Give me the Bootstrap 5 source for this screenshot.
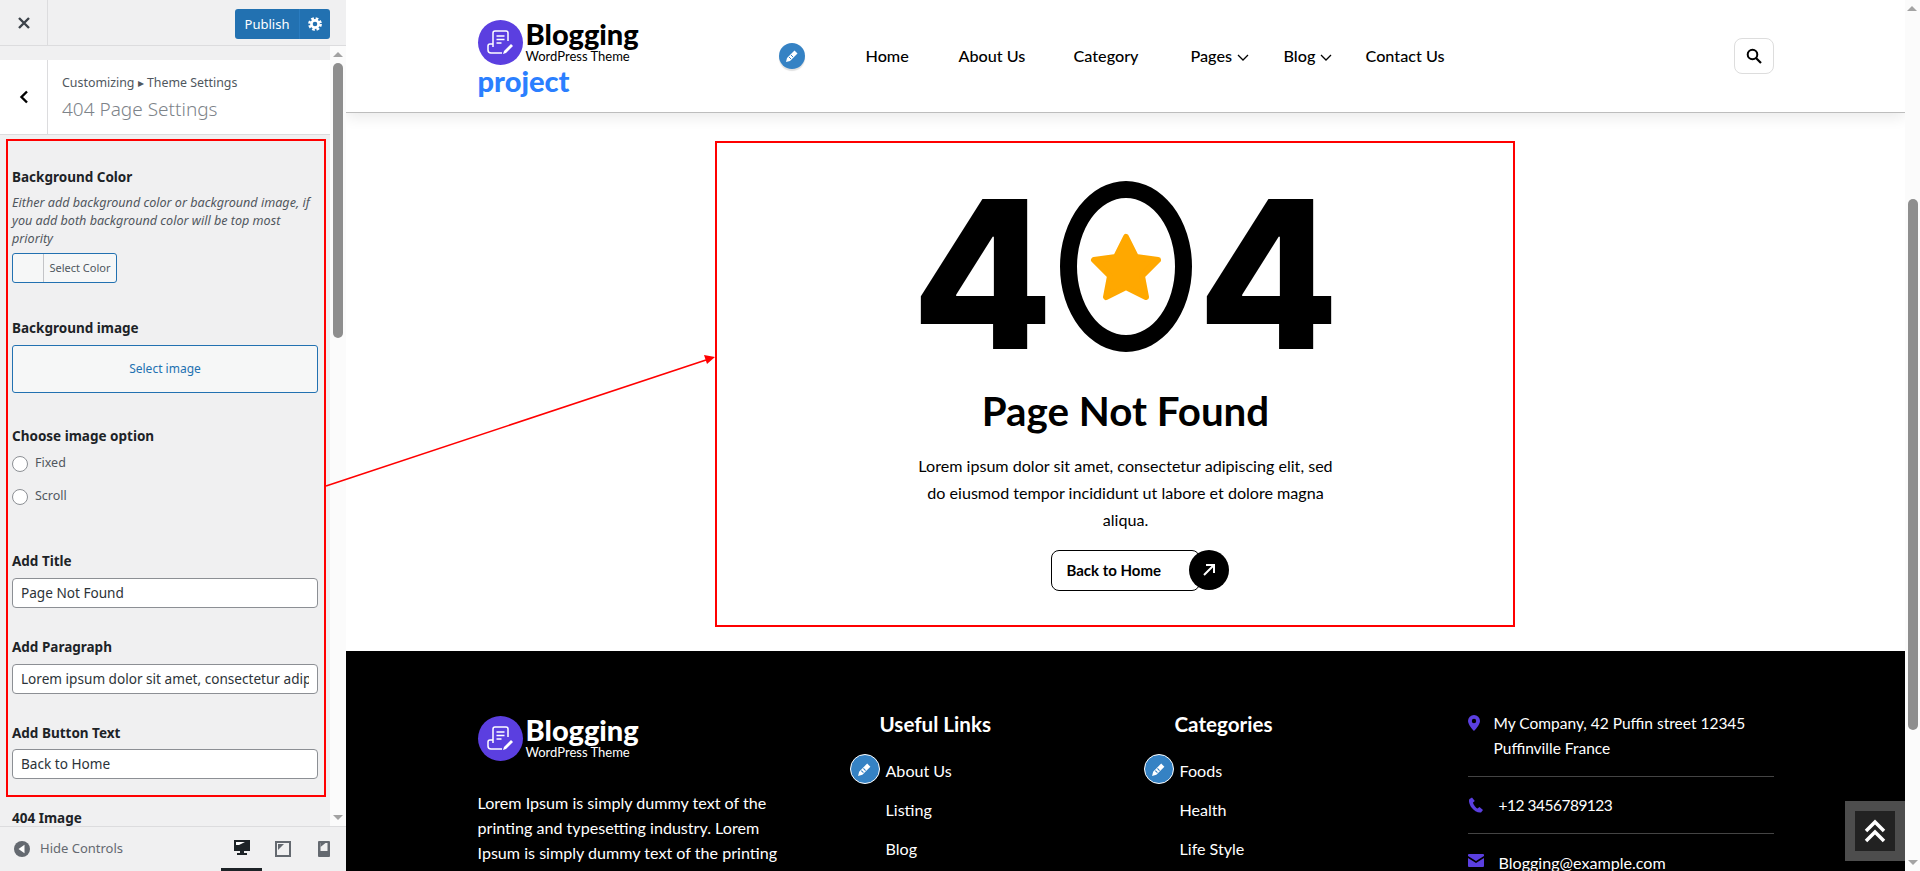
<!DOCTYPE html>
<html lang="en">
<head>
    <meta charset="UTF-8">
    <meta name="viewport" content="width=device-width, initial-scale=1.0">
    <title>404 Page Settings</title>
    <link href="https://cdn.jsdelivr.net/npm/bootstrap@5.3.0/dist/css/bootstrap.min.css" rel="stylesheet">
    <style>
        body { font-family: "Lato", "Liberation Sans", sans-serif; color: #000; }

        /* customizer sidebar */
        .cz-side { width: 346px; flex: none; background: #f0f0f1; font-family: "Noto Sans", "Liberation Sans", sans-serif; font-size: 13px; color: #50575e; }
        .cz-top { height: 46px; border-bottom: 1px solid #dcdcde; }
        .cz-close { width: 48px; border-right: 1px solid #dcdcde; }
        .cz-publish { width: 95px; height: 30px; margin: 9px 16px 0 auto; background: #2271b1; border-radius: 3px; color: #fff; font-size: 13px; }
        .cz-publish span { width: 65px; text-align: center; border-right: 1px solid #2a7cc0; line-height: 30px; }
        .cz-body { min-height: 0; }
        .cz-main { width: 330px; padding-top: 14px; }
        .cz-head { height: 75px; background: #fff; border-bottom: 1px solid #dcdcde; }
        .cz-back { width: 48px; border-right: 1px solid #dcdcde; }
        .cz-crumb { padding: 13px 0 0 14px; line-height: 20px; font-size: 12.4px; }
        .cz-title { font-size: 19px; font-weight: 300; color: #7d8389; line-height: 30px; margin-top: 1px; }
        .cz-box { margin: 4px 4px 0 6px; border: 2px solid #f00; padding: 26px 6px 16px 4px; height: 658px; }
        .cz-label { font-weight: 700; font-size: 13.5px; line-height: 20px; color: #1d2327; margin-bottom: 7px; }
        .cz-desc { font-style: italic; font-size: 12.6px; line-height: 18px; margin-bottom: 5px; white-space: nowrap; }
        .cz-color { width: 105px; height: 30px; background: #f6f7f7; border: 1px solid #2271b1; border-radius: 3px; font-size: 11px; margin-bottom: 35px; }
        .cz-color i { width: 31px; border-right: 1px solid #c3c4c7; }
        .cz-color span { flex: 1; text-align: center; line-height: 28px; }
        .cz-select { height: 48px; background: #f6f7f7; border: 1px solid #2271b1; border-radius: 3px; color: #2271b1; font-size: 12px; line-height: 46px; text-align: center; margin-bottom: 33px; }
        .cz-radio-first { margin-top: 1px; }
        .cz-radio { height: 33px; font-size: 12.5px; }
        .cz-radio i { width: 16px; height: 16px; border: 1px solid #8c8f94; border-radius: 50%; background: #fff; margin-right: 7px; }
        .cz-gap-title { margin-top: 38px; }
        .cz-label-tight { margin-bottom: 6px; }
        .cz-input { height: 30px; background: #fff; border: 1px solid #8c8f94; border-radius: 4px; font-size: 13.6px; line-height: 28px; padding: 0 8px; color: #2c3338; margin-bottom: 29px; }
        .cz-input div { overflow: hidden; white-space: nowrap; }
        .cz-next { padding: 11px 0 0 12px; }
        .cz-bar { width: 16px; flex: none; background: #fbfbfb; }
        .cz-thumb { width: 10px; height: 275px; background: #8e8e8e; border-radius: 5px; margin: 0 auto; }
        .tri-up { width: 0; height: 0; border: 5px solid transparent; border-top: 0; border-bottom: 5px solid #a3a3a3; margin: 6px auto 6px; }
        .tri-down { width: 0; height: 0; border: 5px solid transparent; border-bottom: 0; border-top: 5px solid #a3a3a3; margin: auto auto 6px; }
        .cz-foot { height: 45px; border-top: 1px solid #dcdcde; padding-left: 14px; color: #646970; }
        .cz-hide { margin-left: 10px; }
        .cz-dev { width: 41px; height: 44px; flex: none; }
        .cz-dev.on { border-bottom: 3px solid #1d2327; }
        .cz-devs { margin-left: auto; margin-right: 2px; }

        /* preview */
        .site { min-width: 0; }
        .site-top { height: 113px; border-bottom: 1px solid #bdbdbd; box-shadow: 0 4px 14px rgba(0,0,0,.09); position: relative; }
        .brand { width: 301px; align-self: flex-start; padding-top: 20px; }
        .brand-mark { width: 45px; height: 45px; flex: none; border-radius: 50%; background: #5b3fe0; }
        .brand-name { font-weight: 900; font-size: 29px; line-height: 28px; margin-left: 3px; }
        .brand-sub { font-size: 13px; line-height: 14px; margin-left: 3px; margin-top: 1px; }
        .brand-proj { font-weight: 900; font-size: 29px; line-height: 33px; color: #2b7fff; margin-top: -1px; }
        .pen { width: 26px; height: 26px; border-radius: 50%; background: #3582c4; flex: none; box-shadow: 0 2px 1px rgba(0,0,0,.12); }
        .pen-ring { width: 30px; height: 30px; border: 1.5px solid #fff; box-shadow: none; position: absolute; left: -36px; top: 3px; }
        .top-nav { margin-left: 61px; display: grid; grid-template-columns: 93px 115px 117px 93px 82px auto; font-size: 16.2px; font-weight: 500; }
        .top-nav svg { margin-left: 5px; }
        .find { width: 40px; height: 36px; border: 1px solid #ddd; border-radius: 8px; margin-left: auto; }
        .nf { height: 538px; padding-top: 68px; }
        .nf-num { height: 171px; gap: 17px; }
        .nf-four { width: 120px; font-family: "Inter", "Liberation Sans", sans-serif; font-weight: 800; font-size: 206px; line-height: 150px; margin-top: 18px; display: flex; justify-content: center; }
        .nf-zero { width: 132px; height: 171px; border: 17px solid #000; border-radius: 50%; }
        .nf-zero-txt { position: absolute; opacity: 0; font-size: 1px; }
        .nf-title { font-size: 40.3px; font-weight: 700; line-height: 50px; margin: 34px 0 16px; }
        .nf-text { font-size: 16.1px; line-height: 27px; margin: 0 0 17px; }
        .nf-cta { padding-left: 28px; }
        .nf-btn { width: 149px; height: 41px; border: 1px solid #000; border-radius: 8px; font-size: 15px; font-weight: 700; padding-left: 15px; line-height: 39px; }
        .nf-go { width: 40px; height: 40px; border-radius: 50%; background: #000; margin-left: -11px; }
        .note-box { position: absolute; left: 715px; top: 141px; width: 800px; height: 486px; border: 2px solid #f00; pointer-events: none; }
        .note-arrow { position: absolute; left: 0; top: 0; pointer-events: none; }

        .site-foot { background: #000; color: #fff; height: 300px; padding-top: 61px; font-size: 16.1px; }
        .foot-brand { margin-top: 4px; }
        .foot-text { line-height: 25px; margin: 29px 0 0; white-space: nowrap; }
        .foot-head { font-size: 20.6px; font-weight: 700; line-height: 24px; margin: 0 0 15px; }
        .foot-links { line-height: 39px; list-style: none; padding: 0; margin: 0; }
        .foot-links li { position: relative; }
        .foot-col-a { padding-left: 90px; }
        .foot-col-a .foot-head { margin-left: -6px; }
        .foot-col-b { padding-left: 54px; }
        .foot-col-b .foot-head { margin-left: -5px; }
        .foot-row { line-height: 25px; padding-bottom: 15px; margin-bottom: 16px; border-bottom: 1px solid #444; gap: 10px; white-space: nowrap; }
        .foot-row:first-child { margin-top: -1px; font-size: 15.5px; }
        .foot-ico { width: 16px; flex: none; padding-top: 4px; }
        .foot-ico svg { display: block; }
        .foot-row-b { gap: 15px; }
        .foot-tel { letter-spacing: -.5px; font-size: 15.5px; }
        .page-bar { width: 15px; flex: none; background: #fbfbfb; }
        .page-thumb { width: 10px; height: 531px; background: #8e8e8e; border-radius: 5px; margin: 199px auto 0; }
        .tri-page { position: absolute; right: 3px; top: 0; }
        .to-top { position: absolute; right: 15px; top: 801px; width: 60px; height: 60px; background: #4d4d4d; }
        .to-top div { width: 40px; height: 40px; background: #222; }
    </style>
</head>
<body class="overflow-hidden">
    <div class="d-flex vh-100 position-relative overflow-hidden">
        <!-- customizer controls -->
        <aside class="cz-side d-flex flex-column">
            <div class="cz-top d-flex flex-shrink-0">
                <div class="cz-close d-flex align-items-center justify-content-center">
                    <svg width="14" height="14" viewBox="0 0 14 14"><path d="M2 2l10 10M12 2L2 12" stroke="#3c434a" stroke-width="2.4"/></svg>
                </div>
                <div class="cz-publish d-flex align-items-stretch">
                    <span>Publish</span>
                    <div class="flex-grow-1 d-flex align-items-center justify-content-center">
                        <svg width="14" height="14" viewBox="0 0 14 14"><circle cx="7" cy="7" r="3.6" fill="none" stroke="#fff" stroke-width="2.6"/><circle cx="7" cy="7" r="5.6" fill="none" stroke="#fff" stroke-width="2.6" stroke-dasharray="2.6 1.8"/></svg>
                    </div>
                </div>
            </div>
            <div class="cz-body d-flex flex-grow-1">
                <div class="cz-main d-flex flex-column overflow-hidden">
                    <div class="cz-head d-flex flex-shrink-0">
                        <div class="cz-back d-flex align-items-center justify-content-center">
                            <svg width="10" height="14" viewBox="0 0 10 14"><path d="M8 1.500L2.500 7 8 12.500" fill="none" stroke="#000" stroke-width="2.400"/></svg>
                        </div>
                        <div class="cz-crumb">
                            <div>Customizing ▸ Theme Settings</div>
                            <div class="cz-title">404 Page Settings</div>
                        </div>
                    </div>
                    <div class="cz-box flex-shrink-0">
                        <div class="cz-label">Background Color</div>
                        <div class="cz-desc">Either add background color or background image, if<br>you add both background color will be top most<br>priority</div>
                        <div class="cz-color d-flex"><i></i><span>Select Color</span></div>
                        <div class="cz-label">Background image</div>
                        <div class="cz-select">Select image</div>
                        <div class="cz-label mb-0">Choose image option</div>
                        <div class="cz-radio cz-radio-first d-flex align-items-center"><i></i>Fixed</div>
                        <div class="cz-radio d-flex align-items-center"><i></i>Scroll</div>
                        <div class="cz-label cz-gap-title">Add Title</div>
                        <div class="cz-input"><div>Page Not Found</div></div>
                        <div class="cz-label">Add Paragraph</div>
                        <div class="cz-input"><div>Lorem ipsum dolor sit amet, consectetur adipiscing elit</div></div>
                        <div class="cz-label cz-label-tight">Add Button Text</div>
                        <div class="cz-input mb-0"><div>Back to Home</div></div>
                    </div>
                    <div class="cz-label cz-next">404 Image</div>
                </div>
                <div class="cz-bar d-flex flex-column">
                    <div class="tri-up"></div>
                    <div class="cz-thumb"></div>
                    <div class="tri-down"></div>
                </div>
            </div>
            <div class="cz-foot d-flex align-items-center flex-shrink-0">
                <svg width="16" height="16" viewBox="0 0 16 16"><circle cx="8" cy="8" r="8" fill="#646970"/><path d="M10.500 3.800v8.400L4.500 8z" fill="#fff"/></svg>
                <span class="cz-hide">Hide Controls</span>
                <div class="cz-devs d-flex">
                    <div class="cz-dev on d-flex align-items-center justify-content-center">
                        <svg width="18" height="17" viewBox="0 0 18 17"><path d="M1 1h16v11H1z" fill="#1d2327"/><path d="M3 3h9l-6 3H3z" fill="#fff"/><path d="M7 12h4v2h3v2H4v-2h3z" fill="#1d2327"/></svg>
                    </div>
                    <div class="cz-dev d-flex align-items-center justify-content-center">
                        <svg width="16" height="16" viewBox="0 0 16 16"><path d="M1 1h14v14H1z" fill="none" stroke="#646970" stroke-width="2"/><path d="M3 3h6L3 9z" fill="#646970"/></svg>
                    </div>
                    <div class="cz-dev d-flex align-items-center justify-content-center">
                        <svg width="12" height="16" viewBox="0 0 12 16"><path d="M1 0h10a1 1 0 0 1 1 1v14a1 1 0 0 1-1 1H1a1 1 0 0 1-1-1V1a1 1 0 0 1 1-1z" fill="#646970"/><path d="M2.500 2h7v8h-7z" fill="#f0f0f1"/><path d="M2.500 2h5l-5 4z" fill="#646970"/></svg>
                    </div>
                </div>
            </div>
        </aside>

        <!-- site preview -->
        <main class="site flex-grow-1 d-flex flex-column overflow-hidden">
            <header class="site-top flex-shrink-0 bg-white">
                <div class="container d-flex align-items-center h-100">
                    <div class="brand">
                        <div class="d-flex">
                            <div class="brand-mark d-flex align-items-center justify-content-center">
                                <svg width="27" height="25" viewBox="0 0 27 25" fill="none" stroke="#fff" stroke-width="1.500"><path d="M6 17V3a2 2 0 0 1 2-2h11a2 2 0 0 1 2 2v8"/><path d="M9.500 6h8M9.500 9.500h8M9.500 13h5" stroke-width="1.700"/><path d="M6 14H3a2 2 0 0 0-2 2v4a3 3 0 0 0 3 3h11"/><path d="M17 21l7-7 2 2-7 7-3 1z" fill="#fff" stroke="none"/></svg>
                            </div>
                            <div>
                                <div class="brand-name">Blogging</div>
                                <div class="brand-sub">WordPress Theme</div>
                            </div>
                        </div>
                        <div class="brand-proj">project</div>
                    </div>
                    <div class="pen d-flex align-items-center justify-content-center">
                        <svg width="14" height="14" viewBox="0 0 14 14"><path d="M9.500 1.500l3 3-7.500 7.500-4 1 1-4z" fill="#fff"/><path d="M4 8l2 2M6 6l2 2" stroke="#3582c4"/></svg>
                    </div>
                    <nav class="top-nav">
                        <span>Home</span>
                        <span>About Us</span>
                        <span>Category</span>
                        <span>Pages<svg width="12" height="8" viewBox="0 0 12 8"><path d="M1 1l5 5 5-5" fill="none" stroke="#000" stroke-width="1.300"/></svg></span>
                        <span>Blog<svg width="12" height="8" viewBox="0 0 12 8"><path d="M1 1l5 5 5-5" fill="none" stroke="#000" stroke-width="1.300"/></svg></span>
                        <span>Contact Us</span>
                    </nav>
                    <div class="find d-flex align-items-center justify-content-center">
                        <svg width="16" height="16" viewBox="0 0 16 16"><circle cx="6.500" cy="6.500" r="4.800" fill="none" stroke="#000" stroke-width="2"/><path d="M10 10l5 5" stroke="#000" stroke-width="2.200"/></svg>
                    </div>
                </div>
            </header>

            <section class="nf flex-shrink-0 text-center">
                <div class="nf-num d-flex justify-content-center">
                    <div class="nf-four">4</div>
                    <div class="nf-zero d-flex align-items-center justify-content-center flex-shrink-0">
                        <span class="nf-zero-txt">0</span>
                        <svg width="72" height="68" viewBox="0 0 72 68"><path d="M36 4L46 24 68 27 52 43 56 64 36 54 16 64 20 43 4 27 26 24z" fill="#ffa800" stroke="#ffa800" stroke-width="6" stroke-linejoin="round"/></svg>
                    </div>
                    <div class="nf-four">4</div>
                </div>
                <h1 class="nf-title">Page Not Found</h1>
                <p class="nf-text">Lorem ipsum dolor sit amet, consectetur adipiscing elit, sed<br>do eiusmod tempor incididunt ut labore et dolore magna<br>aliqua.</p>
                <div class="nf-cta d-flex justify-content-center">
                    <div class="nf-btn text-start">Back to Home</div>
                    <div class="nf-go d-flex align-items-center justify-content-center">
                        <svg width="14" height="14" viewBox="0 0 14 14" fill="none" stroke="#fff" stroke-width="2"><path d="M2 12L12 2M4 2h8v8"/></svg>
                    </div>
                </div>
            </section>

            <footer class="site-foot flex-shrink-0">
                <div class="container">
                    <div class="row">
                        <div class="col-3">
                            <div class="d-flex foot-brand">
                                <div class="brand-mark d-flex align-items-center justify-content-center">
                                    <svg width="27" height="25" viewBox="0 0 27 25" fill="none" stroke="#fff" stroke-width="1.500"><path d="M6 17V3a2 2 0 0 1 2-2h11a2 2 0 0 1 2 2v8"/><path d="M9.500 6h8M9.500 9.500h8M9.500 13h5" stroke-width="1.700"/><path d="M6 14H3a2 2 0 0 0-2 2v4a3 3 0 0 0 3 3h11"/><path d="M17 21l7-7 2 2-7 7-3 1z" fill="#fff" stroke="none"/></svg>
                                </div>
                                <div>
                                    <div class="brand-name">Blogging</div>
                                    <div class="brand-sub">WordPress Theme</div>
                                </div>
                            </div>
                            <p class="foot-text">Lorem Ipsum is simply dummy text of the<br>printing and typesetting industry. Lorem<br>Ipsum is simply dummy text of the printing</p>
                        </div>
                        <div class="col-3 foot-col-a">
                            <h5 class="foot-head">Useful Links</h5>
                            <ul class="foot-links">
                                <li>
                                    <div class="pen pen-ring d-flex align-items-center justify-content-center">
                                        <svg width="15" height="15" viewBox="0 0 14 14"><path d="M9.500 1.500l3 3-7.500 7.500-4 1 1-4z" fill="#fff"/><path d="M4 8l2 2M6 6l2 2" stroke="#3582c4"/></svg>
                                    </div>
                                    About Us
                                </li>
                                <li>Listing</li>
                                <li>Blog</li>
                            </ul>
                        </div>
                        <div class="col-3 foot-col-b">
                            <h5 class="foot-head">Categories</h5>
                            <ul class="foot-links">
                                <li>
                                    <div class="pen pen-ring d-flex align-items-center justify-content-center">
                                        <svg width="15" height="15" viewBox="0 0 14 14"><path d="M9.500 1.500l3 3-7.500 7.500-4 1 1-4z" fill="#fff"/><path d="M4 8l2 2M6 6l2 2" stroke="#3582c4"/></svg>
                                    </div>
                                    Foods
                                </li>
                                <li>Health</li>
                                <li>Life Style</li>
                            </ul>
                        </div>
                        <div class="col-3">
                            <div class="foot-row d-flex">
                                <div class="foot-ico"><svg width="12" height="16" viewBox="0 0 12 16"><path d="M6 0a6 6 0 0 0-6 6c0 4 6 10 6 10s6-6 6-10a6 6 0 0 0-6-6zm0 8.200a2.200 2.200 0 1 1 0-4.400 2.200 2.200 0 0 1 0 4.400z" fill="#5b3fe0"/></svg></div>
                                <div>My Company, 42 Puffin street 12345<br>Puffinville France</div>
                            </div>
                            <div class="foot-row foot-row-b d-flex">
                                <div class="foot-ico"><svg width="16" height="16" viewBox="0 0 16 16"><path d="M4 .5L1.500 2C.5 3 1 7 3.500 10.500S10 16 13 15.500l2-2.500-3.500-3-2 1.500C8 11 5.500 8 5 5.500L6.800 4z" fill="#5b3fe0"/></svg></div>
                                <div class="foot-tel">+12 3456789123</div>
                            </div>
                            <div class="foot-row foot-row-b d-flex border-0">
                                <div class="foot-ico"><svg width="16" height="13" viewBox="0 0 16 13"><path d="M1 0h14a1 1 0 0 1 1 1v1L8 7 0 2V1a1 1 0 0 1 1-1zM0 4l8 5 8-5v8a1 1 0 0 1-1 1H1a1 1 0 0 1-1-1z" fill="#5b3fe0"/></svg></div>
                                <div>Blogging@example.com</div>
                            </div>
                        </div>
                    </div>
                </div>
            </footer>
        </main>

        <div class="page-bar d-flex flex-column">
            <div class="tri-up tri-page"></div>
            <div class="page-thumb"></div>
            <div class="tri-down"></div>
        </div>

        <!-- annotation drawn on top of the screenshot -->
        <div class="note-box"></div>
        <svg class="note-arrow" width="1920" height="871" viewBox="0 0 1920 871">
            <path d="M326 486L706 360" stroke="#f00" stroke-width="1.600"/>
            <path d="M715 357l-11-2 3 9z" fill="#f00"/>
        </svg>
        <div class="to-top d-flex align-items-center justify-content-center">
            <div class="d-flex align-items-center justify-content-center">
                <svg width="22" height="24" viewBox="0 0 22 24" fill="none" stroke="#fff" stroke-width="3.500"><path d="M2 12l9-9 9 9M2 22l9-9 9 9"/></svg>
            </div>
        </div>
    </div>

    <script src="https://cdn.jsdelivr.net/npm/bootstrap@5.3.0/dist/js/bootstrap.bundle.min.js"></script>
</body>
</html>
